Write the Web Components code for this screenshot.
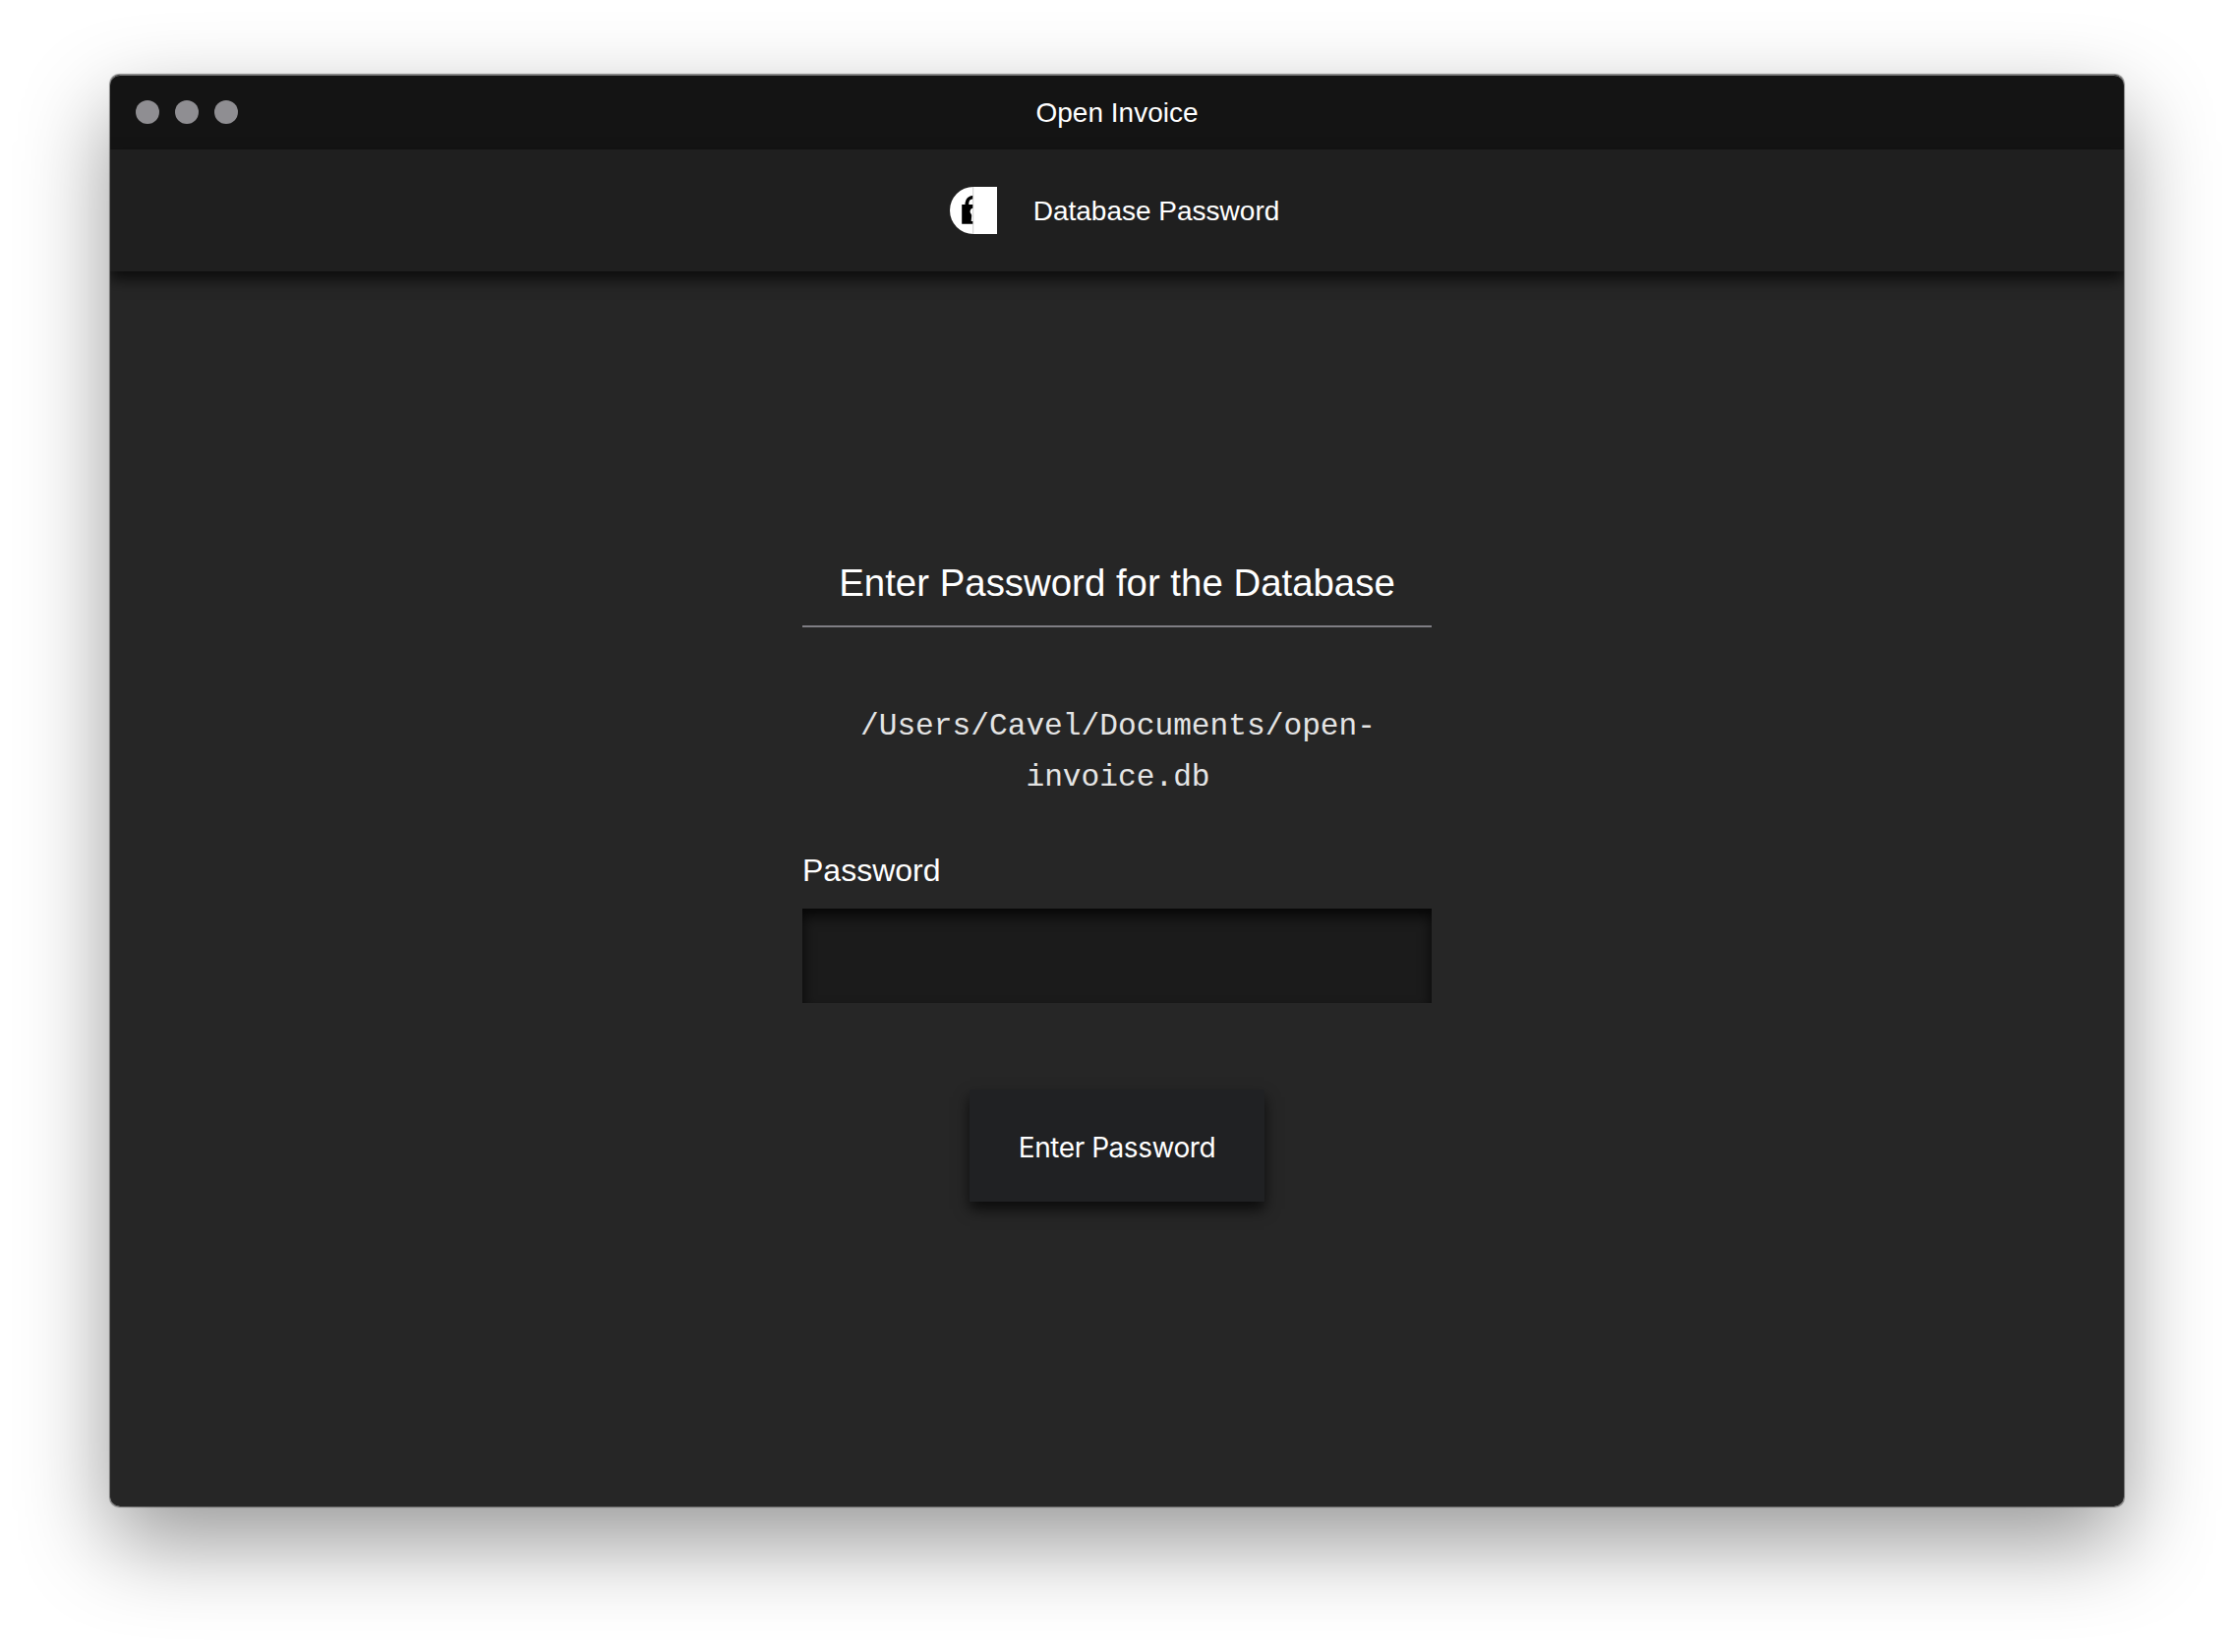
<!DOCTYPE html>
<html lang="en">
<head>
<meta charset="utf-8">
<title>Open Invoice</title>
<style>
  html, body { margin: 0; height: 100%; background: #fff; }
  body { box-sizing: border-box; height: 1680px; padding: 76px 112px 148px; overflow: hidden;
    font-family: "Liberation Sans", Arial, sans-serif; color: #fff; }
</style>
</head>
<body>
<app-window>
  <title-bar slot="title">Open Invoice</title-bar>
  <page-header slot="header">Database Password</page-header>
  <password-form path="/Users/Cavel/Documents/open-invoice.db">
    <span slot="heading">Enter Password for the Database</span>
    <password-field>Password</password-field>
    <submit-button slot="action">Enter Password</submit-button>
  </password-form>
</app-window>
<script>
  const define = (name, html, init) => customElements.define(name, class extends HTMLElement {
    constructor() {
      super();
      this.attachShadow({ mode: 'open' }).innerHTML = html;
    }
    connectedCallback() { if (init) init(this); }
  });

  define('app-window', `
    <style>
      :host { display: block; height: 1456px; border-radius: 10px;
        box-shadow: 0 0 1px 0.5px rgba(0,0,0,.45), 0 36px 90px rgba(0,0,0,.41); }
      .frame { display: flex; flex-direction: column; height: 100%; overflow: hidden;
        border-radius: 10px; background: #262626; box-sizing: border-box; }
      main { flex: 1; display: flex; justify-content: center; }
    </style>
    <div class="frame"><slot name="title"></slot><slot name="header"></slot><main><slot></slot></main></div>`);

  define('title-bar', `
    <style>
      :host { display: grid; grid-template-columns: 1fr auto 1fr; align-items: center; border-radius: 10px 10px 0 0;
        height: 76px; padding: 0 26px; background: #141414; box-shadow: inset 0 1px #747474; font-size: 28px; }
      .dots { display: flex; gap: 16px; }
      i { width: 24px; height: 24px; border-radius: 50%; background: #8f8e92; }
      span { padding-top: 2px; }
    </style>
    <div class="dots"><i></i><i></i><i></i></div><span><slot></slot></span>`);

  define('page-header', `
    <style>
      :host { display: flex; align-items: center; justify-content: center; gap: 36px; height: 124px;
        padding-right: 6px; background: #1f1f1f; box-shadow: 0 8px 14px rgba(0,0,0,.7); font-size: 28px; }
      svg { width: 50px; height: 50px; }
      span { padding-top: 2px; }
    </style>
    <svg viewBox="0 0 50 50">
      <path d="M25 1H49V49H25A24 24 0 0 1 25 1Z" fill="#fff"/>
      <path d="M16.5 19.5V17.5A8.4 8.4 0 0 1 24.5 9.7V13.2A4.6 4.6 0 0 0 20.3 17.7V19.5Z" fill="#000"/>
      <path d="M13.2 19H24.7V22.6A3.5 3.5 0 0 0 22.6 28.6L23.2 30L22.7 36H24.7V38.7H13.2Z" fill="#000"/>
      <path d="M24.7 1V49" stroke="#c4c4c4" stroke-width=".8"/>
    </svg>
    <span><slot></slot></span>`);

  define('password-form', `
    <style>
      :host { display: flex; flex-direction: column; align-items: center; width: 640px; padding-top: 285px; }
      h1 { box-sizing: border-box; width: 640px; height: 77px; margin: 0; border-bottom: 2px solid #7f7e84;
        font-size: 38.4px; line-height: 64px; font-weight: 400; text-align: center; }
      p { box-sizing: border-box; width: 640px; margin: 75px 0 0; padding-left: 2px; font: 31.2px/52px "Liberation Mono", "Courier New", monospace;
        text-align: center; color: #e4e4e4; }
      .action { margin-top: 88px; }
    </style>
    <h1><slot name="heading"></slot></h1>
    <p></p>
    <slot></slot>
    <div class="action"><slot name="action"></slot></div>`,
    el => { el.shadowRoot.querySelector('p').textContent = el.getAttribute('path'); });

  define('password-field', `
    <style>
      :host { display: block; width: 640px; margin-top: 42px; }
      label { display: block; height: 65px; line-height: 52px; font-size: 32px; }
      input { display: block; box-sizing: border-box; width: 640px; height: 96px; margin: 0; padding: 0 24px;
        border: 0; outline: 0; background: #1b1b1b; color: #fff; font-size: 32px;
        box-shadow: inset 0 8px 14px rgba(0,0,0,.75); }
    </style>
    <label for="pw"><slot></slot></label>
    <input id="pw" type="password">`);

  define('submit-button', `
    <style>
      :host { display: block; }
      button { display: block; box-sizing: border-box; width: 300px; height: 114px; margin: 0; padding: 3px 0 0; border: 0;
        background: #202123; color: #fff; font: 28px Inter, sans-serif; letter-spacing: -.45px;
        box-shadow: 0 8px 14px rgba(0,0,0,.7); }
    </style>
    <button type="button"><slot></slot></button>`);
</script>
</body>
</html>
